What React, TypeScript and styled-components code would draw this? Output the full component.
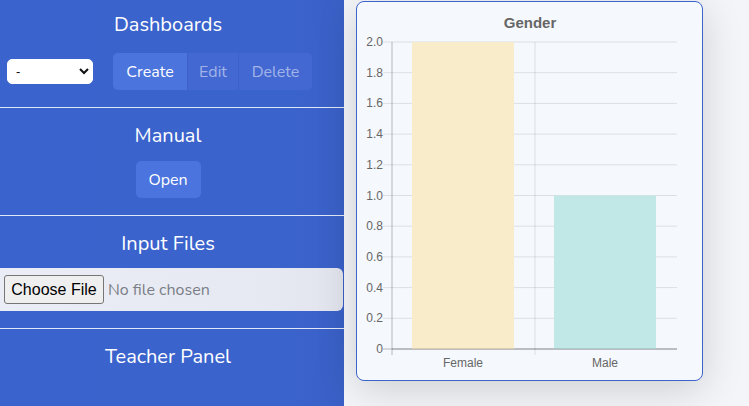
import React from "react";
import styled, { createGlobalStyle } from "styled-components";

const Global = createGlobalStyle`
  html, body { margin: 0; padding: 0; }
  body { font-family: "Nunito", "Lato", "Noto Sans", sans-serif; background: #f3f5f8; overflow: hidden; }
  * { box-sizing: border-box; }
`;

const Page = styled.div`
  display: flex;
  width: 749px;
  height: 406px;
  background: #f3f5f8;
  overflow: hidden;
`;

const Sidebar = styled.aside`
  width: 344px;
  flex: none;
  height: 100%;
  background: linear-gradient(90deg, #3b63cd 0%, #3b63cc 85%, #3a60c6 100%);
  display: flex;
  flex-direction: column;
  color: #fff;
`;

const Section = styled.section<{ $top: number; $bottom: number; $gap: number; $last?: boolean }>`
  display: flex;
  flex-direction: column;
  align-items: center;
  padding: ${(p) => p.$top}px 8px ${(p) => p.$bottom}px 0;
  gap: ${(p) => p.$gap}px;
  border-bottom: ${(p) => (p.$last ? "none" : "1px solid rgba(255,255,255,0.85)")};
`;

const Title = styled.h2`
  margin: 0;
  font-size: 20px;
  line-height: 24px;
  font-weight: 400;
  color: #fff;
  text-align: center;
`;

const Row = styled.div`
  align-self: stretch;
  display: flex;
  align-items: center;
  gap: 20px;
  padding-left: 7px;
`;

const Select = styled.select`
  width: 86px;
  height: 25px;
  border: 1px solid #fff;
  border-radius: 5px;
  background: #fff;
  font-family: "Liberation Sans", Arial, sans-serif;
  font-size: 13px;
  padding: 0 4px;
  color: #111;
  outline: none;
`;

const Group = styled.div`
  display: flex;
  height: 37px;
  border-radius: 5px;
  overflow: hidden;
  background: #4468d2;
`;

const GroupButton = styled.button<{ $active?: boolean; $w: number }>`
  width: ${(p) => p.$w}px;
  height: 100%;
  border: none;
  border-left: ${(p) => (p.$active ? "none" : "1px solid rgba(40,70,170,0.25)")};
  background: ${(p) => (p.$active ? "#4b74dd" : "transparent")};
  color: ${(p) => (p.$active ? "#fff" : "rgba(255,255,255,0.5)")};
  font-family: inherit;
  font-size: 16px;
  padding: 0;
  cursor: pointer;
`;

const SoloButton = styled.button`
  width: 65px;
  height: 37px;
  border: none;
  border-radius: 5px;
  background: #4b74de;
  color: #fff;
  font-family: inherit;
  font-size: 16px;
  padding: 0;
`;

const FileBox = styled.label`
  align-self: stretch;
  margin-right: -8px;
  width: 343px;
  height: 43px;
  display: flex;
  align-items: center;
  padding-left: 4px;
  border-radius: 0 6px 6px 0;
  background: linear-gradient(90deg, #eaedf5 0%, #e6e9f1 80%, #e1e4ec 100%);
`;

const FileInput = styled.input`
  font-family: "Nunito", "Lato", "Noto Sans", sans-serif;
  font-size: 16px;
  color: #7a7e86;
  &::file-selector-button {
    font-family: "Liberation Sans", Arial, sans-serif;
    font-size: 16px;
    color: #000;
    height: 29px;
    width: 100px;
    padding: 0;
    margin-right: 4px;
    border: 1px solid #767676;
    border-radius: 3px;
    background: #efefef;
  }
`;

const Main = styled.main`
  flex: 1;
  padding: 1px 0 0 12px;
`;

const Card = styled.div`
  width: 347px;
  height: 380px;
  border: 1px solid #3d63cc;
  border-radius: 8px;
  background: #f5f8fc;
  box-shadow: 0 8px 40px rgba(0, 0, 0, 0.16);
  overflow: hidden;
`;

const ChartSvg = styled.svg`
  display: block;
  font-family: "Liberation Sans", Arial, sans-serif;
`;

const OX = 357;
const OY = 2;
const yTicks = ["2.0", "1.8", "1.6", "1.4", "1.2", "1.0", "0.8", "0.6", "0.4", "0.2", "0"];
const yTop = 42;
const yBot = 349;
const xL = 392;
const xR = 677;

function Chart() {
  const step = (yBot - yTop) / 10;
  return (
    <ChartSvg width={345} height={378} viewBox="0 0 345 378">
      <g transform={`translate(${-OX}, ${-OY})`}>
        <text x={530} y={28} textAnchor="middle" fontSize={15} fontWeight={700} fill="#666">
          Gender
        </text>
        {yTicks.map((t, i) => {
          const y = yTop + i * step;
          return (
            <g key={t}>
              <line
                x1={383}
                x2={xR}
                y1={y}
                y2={y}
                stroke={i === 10 ? "rgba(0,0,0,0.25)" : "rgba(0,0,0,0.1)"}
                strokeWidth={1}
              />
              <text x={383} y={y + 4} textAnchor="end" fontSize={12} fill="#666">
                {t}
              </text>
            </g>
          );
        })}
        <rect x={412} y={yTop} width={102} height={yBot - yTop} fill="#f8ecca" />
        <rect x={554} y={yTop + 5 * step} width={102} height={yBot - yTop - 5 * step} fill="#c1e7e7" />
        <line x1={xL} x2={xL} y1={yTop} y2={355} stroke="rgba(0,0,0,0.25)" />
        <line x1={535} x2={535} y1={yTop} y2={355} stroke="rgba(0,0,0,0.1)" />
        <line x1={xL} x2={xR} y1={yBot} y2={yBot} stroke="rgba(0,0,0,0.25)" />
        <text x={463} y={367} textAnchor="middle" fontSize={12} fill="#666">
          Female
        </text>
        <text x={605} y={367} textAnchor="middle" fontSize={12} fill="#666">
          Male
        </text>
      </g>
    </ChartSvg>
  );
}

export default function App() {
  return (
    <Page>
      <Global />
      <Sidebar>
        <Section $top={13} $bottom={17} $gap={16}>
          <Title>Dashboards</Title>
          <Row>
            <Select defaultValue="-">
              <option value="-">-</option>
            </Select>
            <Group>
              <GroupButton $active $w={74}>Create</GroupButton>
              <GroupButton $w={51}>Edit</GroupButton>
              <GroupButton $w={74}>Delete</GroupButton>
            </Group>
          </Row>
        </Section>
        <Section $top={16} $bottom={17} $gap={13}>
          <Title>Manual</Title>
          <SoloButton>Open</SoloButton>
        </Section>
        <Section $top={16} $bottom={17} $gap={12}>
          <Title>Input Files</Title>
          <FileBox>
            <FileInput type="file" />
          </FileBox>
        </Section>
        <Section $top={16} $bottom={0} $gap={0} $last>
          <Title>Teacher Panel</Title>
        </Section>
      </Sidebar>
      <Main>
        <Card>
          <Chart />
        </Card>
      </Main>
    </Page>
  );
}
